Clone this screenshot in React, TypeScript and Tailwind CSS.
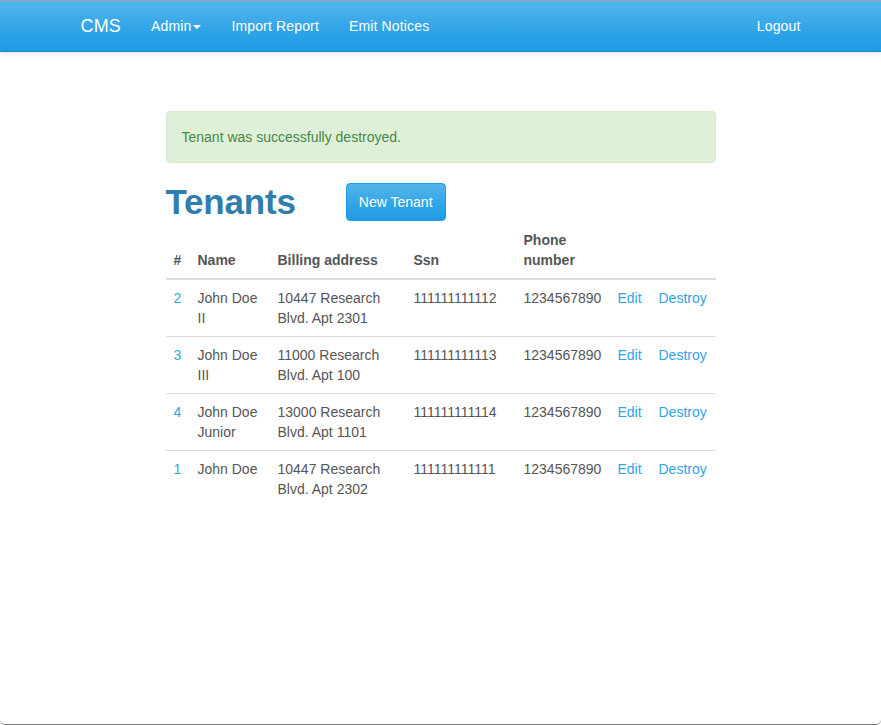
const tenants = [
  { id: 2, name: "John Doe II", address: "10447 Research Blvd. Apt 2301", ssn: "111111111112", phone: "1234567890" },
  { id: 3, name: "John Doe III", address: "11000 Research Blvd. Apt 100", ssn: "111111111113", phone: "1234567890" },
  { id: 4, name: "John Doe Junior", address: "13000 Research Blvd. Apt 1101", ssn: "111111111114", phone: "1234567890" },
  { id: 1, name: "John Doe", address: "10447 Research Blvd. Apt 2302", ssn: "111111111111", phone: "1234567890" },
];

function Navbar() {
  return (
    <nav className="h-[51px] border-b border-[#178acc] bg-[linear-gradient(#54b4eb,#2fa4e7_60%,#1d9ce5)] shadow-[0_1px_10px_rgba(0,0,0,0.1)] text-white">
      <div className="w-[720px] mx-auto h-full flex items-center tracking-[0.15px]">
        <a className="text-[18px] pr-[15px]">CMS</a>
        <a className="px-[15px] text-[14px] flex items-center">
          Admin
          <span className="ml-[2px] mt-[1px] w-0 h-0 border-x-[4px] border-x-transparent border-t-[4px] border-t-white"></span>
        </a>
        <a className="px-[15px] text-[14px]">Import Report</a>
        <a className="px-[15px] text-[14px]">Emit Notices</a>
        <a className="ml-auto text-[14px]">Logout</a>
      </div>
    </nav>
  );
}

export default function App() {
  return (
    <div className="h-[725px] border-t border-[#a3a3a3] border-b border-b-[#7a7a7a] rounded-b-[5px] overflow-hidden bg-white font-['Liberation_Sans',Arial,sans-serif] text-[#555555] text-[14px] leading-[20px]">
      <Navbar />
      <main className="w-[550px] mx-auto pt-[59px]">
        <div className="bg-[#dff0d8] border border-[#d6e9c6] rounded-[4px] px-[15px] py-[15px] text-[#468847]">
          Tenant was successfully destroyed.
        </div>
        <div className="mt-[19px] h-[40px] flex items-center">
          <h1 className="text-[35px] font-bold text-[#317eac] leading-[40px] tracking-[-0.2px]">Tenants</h1>
          <button className="ml-[50px] w-[100px] h-[38px] rounded-[4px] border border-[#1d9ce5] bg-[linear-gradient(#54b4eb,#2fa4e7_60%,#1d9ce5)] text-white text-[14px]">
            New Tenant
          </button>
        </div>
        <table className="w-[550px] table-fixed border-collapse">
          <colgroup>
            <col className="w-[24px]" />
            <col className="w-[80px]" />
            <col className="w-[136px]" />
            <col className="w-[110px]" />
            <col className="w-[94px]" />
            <col className="w-[41px]" />
            <col className="w-[65px]" />
          </colgroup>
          <thead>
            <tr className="border-b-2 border-[#dddddd]">
              <th className="p-[8px] text-left align-bottom font-bold">#</th>
              <th className="p-[8px] text-left align-bottom font-bold">Name</th>
              <th className="p-[8px] text-left align-bottom font-bold">Billing address</th>
              <th className="p-[8px] text-left align-bottom font-bold">Ssn</th>
              <th className="p-[8px] text-left align-bottom font-bold">Phone number</th>
              <th className="p-[8px]"></th>
              <th className="p-[8px]"></th>
            </tr>
          </thead>
          <tbody>
            {tenants.map((t, i) => (
              <tr key={t.id} className={i > 0 ? "border-t border-[#dddddd]" : ""}>
                <td className="p-[8px] align-top text-[#2fa4e7]">{t.id}</td>
                <td className="p-[8px] align-top">{t.name}</td>
                <td className="p-[8px] align-top">{t.address}</td>
                <td className="p-[8px] align-top whitespace-nowrap">{t.ssn}</td>
                <td className="p-[8px] align-top whitespace-nowrap">{t.phone}</td>
                <td className="p-[8px] align-top text-[#2fa4e7]">Edit</td>
                <td className="p-[8px] align-top text-[#2fa4e7]">Destroy</td>
              </tr>
            ))}
          </tbody>
        </table>
      </main>
    </div>
  );
}
